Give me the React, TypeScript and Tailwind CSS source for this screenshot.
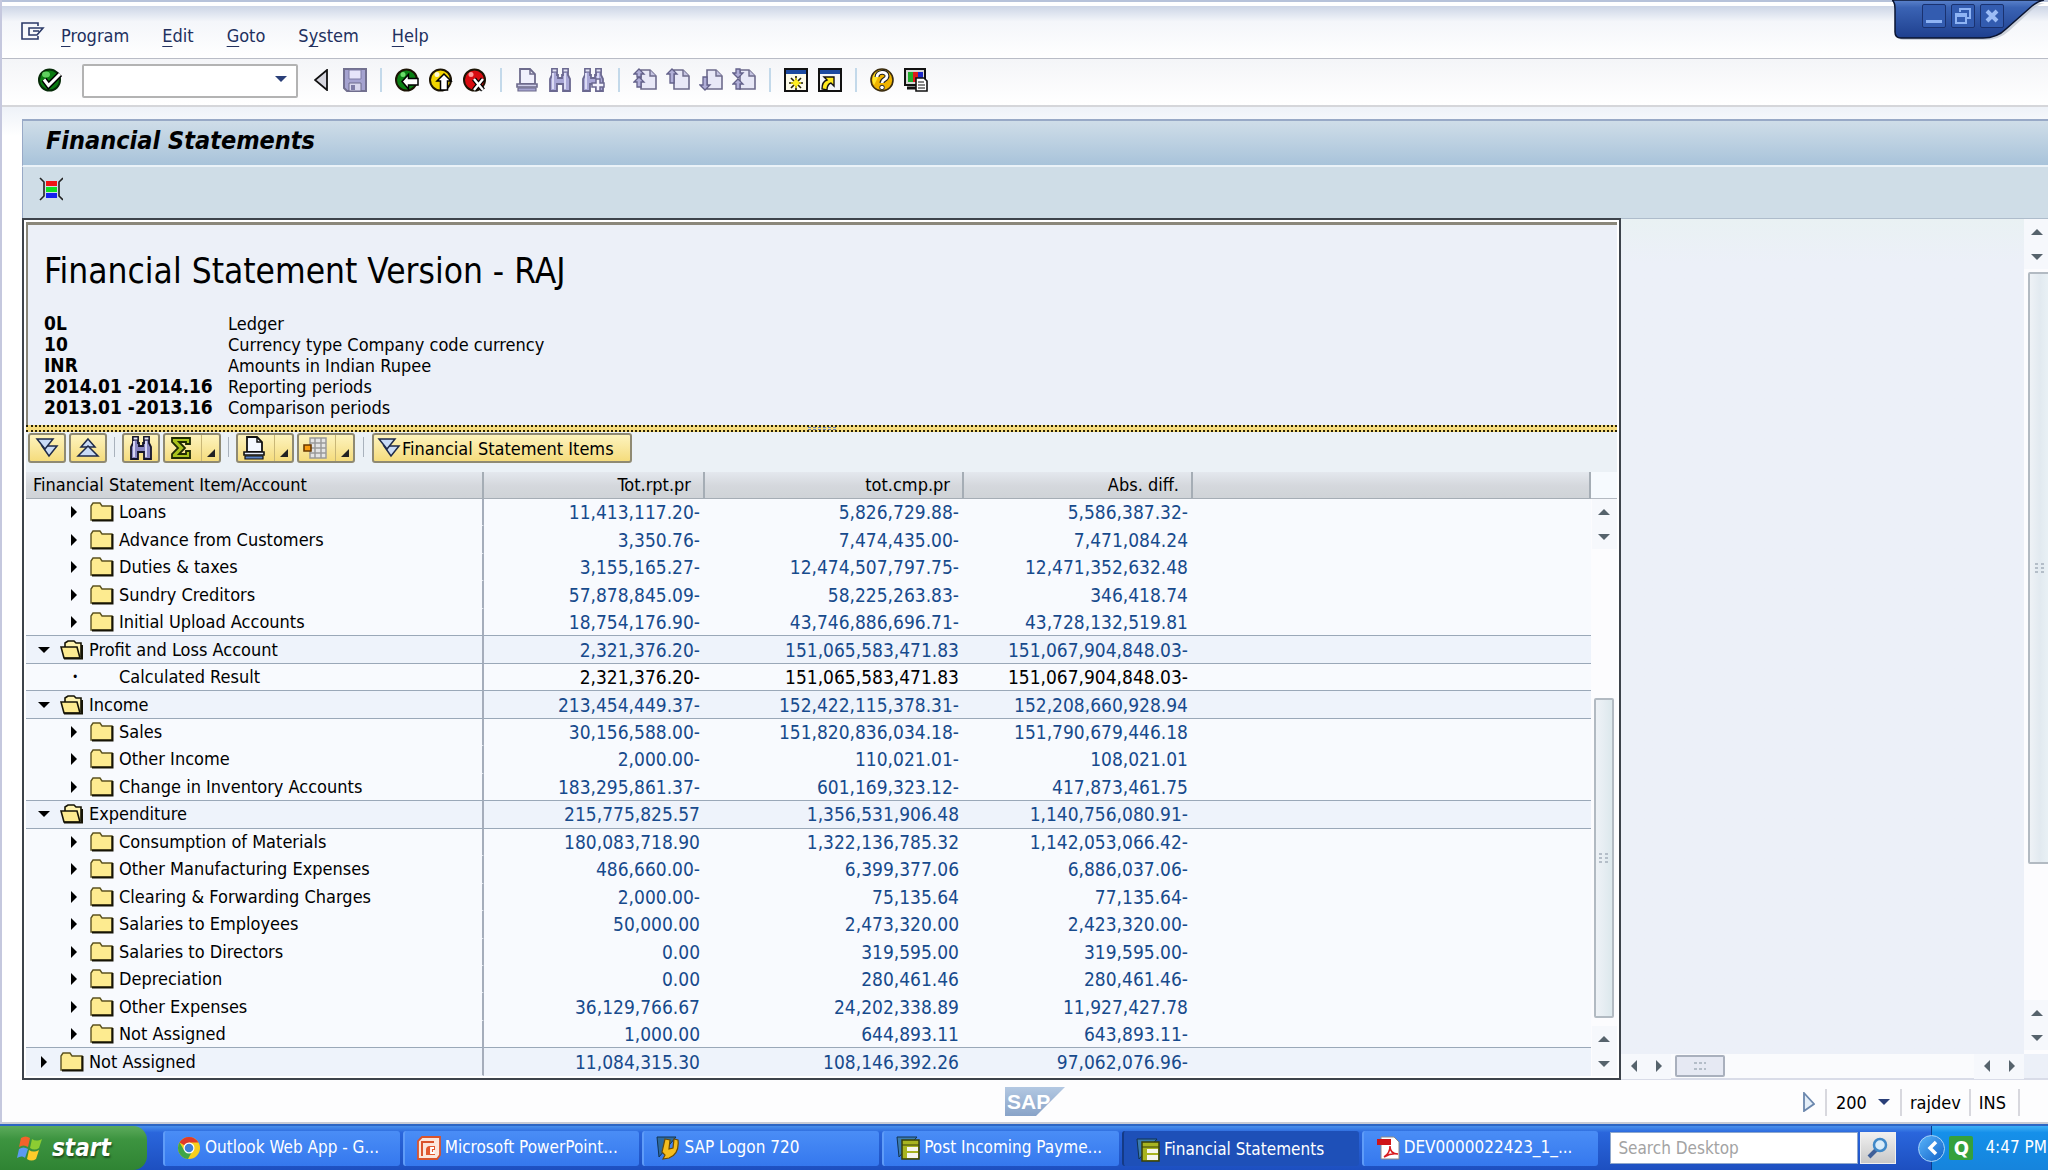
import type { ReactNode } from "react";

interface Row {
  level: 0 | 1;
  kind: "open" | "closed" | "leaf";
  name: string;
  values: [string, string, string];
}

const rows: Row[] = [
  { level: 1, kind: "closed", name: "Loans", values: ["11,413,117.20-", "5,826,729.88-", "5,586,387.32-"] },
  { level: 1, kind: "closed", name: "Advance from Customers", values: ["3,350.76-", "7,474,435.00-", "7,471,084.24"] },
  { level: 1, kind: "closed", name: "Duties & taxes", values: ["3,155,165.27-", "12,474,507,797.75-", "12,471,352,632.48"] },
  { level: 1, kind: "closed", name: "Sundry Creditors", values: ["57,878,845.09-", "58,225,263.83-", "346,418.74"] },
  { level: 1, kind: "closed", name: "Initial Upload Accounts", values: ["18,754,176.90-", "43,746,886,696.71-", "43,728,132,519.81"] },
  { level: 0, kind: "open", name: "Profit and Loss Account", values: ["2,321,376.20-", "151,065,583,471.83", "151,067,904,848.03-"] },
  { level: 1, kind: "leaf", name: "Calculated Result", values: ["2,321,376.20-", "151,065,583,471.83", "151,067,904,848.03-"] },
  { level: 0, kind: "open", name: "Income", values: ["213,454,449.37-", "152,422,115,378.31-", "152,208,660,928.94"] },
  { level: 1, kind: "closed", name: "Sales", values: ["30,156,588.00-", "151,820,836,034.18-", "151,790,679,446.18"] },
  { level: 1, kind: "closed", name: "Other Income", values: ["2,000.00-", "110,021.01-", "108,021.01"] },
  { level: 1, kind: "closed", name: "Change in Inventory Accounts", values: ["183,295,861.37-", "601,169,323.12-", "417,873,461.75"] },
  { level: 0, kind: "open", name: "Expenditure", values: ["215,775,825.57", "1,356,531,906.48", "1,140,756,080.91-"] },
  { level: 1, kind: "closed", name: "Consumption of Materials", values: ["180,083,718.90", "1,322,136,785.32", "1,142,053,066.42-"] },
  { level: 1, kind: "closed", name: "Other Manufacturing Expenses", values: ["486,660.00-", "6,399,377.06", "6,886,037.06-"] },
  { level: 1, kind: "closed", name: "Clearing & Forwarding Charges", values: ["2,000.00-", "75,135.64", "77,135.64-"] },
  { level: 1, kind: "closed", name: "Salaries to Employees", values: ["50,000.00", "2,473,320.00", "2,423,320.00-"] },
  { level: 1, kind: "closed", name: "Salaries to Directors", values: ["0.00", "319,595.00", "319,595.00-"] },
  { level: 1, kind: "closed", name: "Depreciation", values: ["0.00", "280,461.46", "280,461.46-"] },
  { level: 1, kind: "closed", name: "Other Expenses", values: ["36,129,766.67", "24,202,338.89", "11,927,427.78"] },
  { level: 1, kind: "closed", name: "Not Assigned", values: ["1,000.00", "644,893.11", "643,893.11-"] },
  { level: 0, kind: "closed", name: "Not Assigned", values: ["11,084,315.30", "108,146,392.26", "97,062,076.96-"] },
];

const details: [string, string][] = [
  ["0L", "Ledger"],
  ["10", "Currency type Company code currency"],
  ["INR", "Amounts in Indian Rupee"],
  ["2014.01 -2014.16", "Reporting periods"],
  ["2013.01 -2013.16", "Comparison periods"],
];

/* ---------- icons ---------- */

function CheckIcon() {
  return (
    <svg className="w-6 h-6" viewBox="0 0 24 24">
      <circle cx="11.5" cy="12" r="10.5" fill="#0b7a12" stroke="#062b08" strokeWidth="2" />
      <ellipse cx="8" cy="6.5" rx="4" ry="3" fill="#5fd05f" />
      <path d="M6 11.500l4.500 6L22 6" fill="none" stroke="#000" strokeWidth="6" />
      <path d="M6 11.500l4.500 6L22 6" fill="none" stroke="#fff" strokeWidth="3" />
    </svg>
  );
}

function BallIcon({ kind }: { kind: "back" | "up" | "cancel" }) {
  const fill = { back: "#0b8014", up: "#f2d400", cancel: "#d80c10" }[kind];
  const shine = { back: "#6bdc6b", up: "#fffbd0", cancel: "#ff9a9a" }[kind];
  return (
    <svg className="w-6 h-6" viewBox="0 0 24 24">
      <circle cx="11.500" cy="12" r="10.500" fill={fill} stroke="#1c1405" strokeWidth="2" />
      <circle cx="8" cy="6.500" r="2.500" fill={shine} />
      {kind === "back" && (
        <path d="M7 13.500l6.500-7v4H23v6.500h-9.500v4z" fill="#fff" stroke="#000" strokeWidth="1.500" />
      )}
      {kind === "up" && (
        <path d="M15 6l7 7h-3.500v9h-7v-9H8z" fill="#fff" stroke="#000" strokeWidth="1.500" />
      )}
      {kind === "cancel" && (
        <>
          <path d="M11 11l9 11M20 11l-9 11" stroke="#000" strokeWidth="5" />
          <path d="M11 11l9 11M20 11l-9 11" stroke="#fff" strokeWidth="2.500" />
        </>
      )}
    </svg>
  );
}

function SaveIcon() {
  return (
    <svg className="w-6 h-6" viewBox="0 0 24 24">
      <path d="M1 1h22v22H4l-3-3z" fill="#a5a3d0" stroke="#72708f" strokeWidth="2" />
      <path d="M6 2h12v9H6z" fill="#e6e4fa" stroke="#7f7da6" />
      <path d="M6 15h12v8H6z" fill="#d9d8ee" stroke="#6c6a8c" />
      <path d="M8 17h4v5H8z" fill="#7f7da6" />
    </svg>
  );
}

function PrintIcon({ active }: { active?: boolean }) {
  const line = active ? "#111" : "#6d6b8c";
  return (
    <svg className="w-6 h-6" viewBox="0 0 24 24">
      <path d="M5 1h10l5 5v10H5z" fill={active ? "#f4f8ff" : "#f0f0fc"} stroke={line} strokeWidth="1.800" />
      <path d="M15 1v5h5" fill="none" stroke={line} strokeWidth="1.500" />
      <path d="M2 16h20v3H2z" fill={active ? "#e6eefc" : "#d0cfea"} stroke={line} strokeWidth="1.600" />
      <path d="M3 20h18v3H3z" fill={active ? "#5a83c4" : "#a5a3d0"} stroke={line} strokeWidth="1.200" />
    </svg>
  );
}

function FindIcon({ plus, active }: { plus?: boolean; active?: boolean }) {
  const line = active ? "#14142a" : "#6a6890";
  return (
    <svg className="w-6 h-6" viewBox="0 0 24 24">
      <path
        d="M4 1h5v6h1v3h4V7h1V1h5v6l2 4v12h-7v-7H9v7H2V11l2-4z"
        fill={active ? "#8886c0" : "#a9a7d6"}
        stroke={line}
        strokeWidth="1.800"
      />
      <path d="M5 5v16M17 5v16" stroke={active ? "#d8d8f4" : "#dcdcf5"} strokeWidth="2" />
      <path d="M4 1h5v3H4zM15 1h5v3h-5z" fill="#e3e3f5" stroke={line} strokeWidth="1.200" />
      {plus && <path d="M15 11h4v4h4v4h-4v4h-4v-4h-4v-4h4z" fill="#f2f2fc" stroke={line} strokeWidth="1.500" />}
    </svg>
  );
}

function PageIcon({ kind }: { kind: "first" | "prev" | "next" | "last" }) {
  const arrows = {
    first: "M6 1l5 5H8v3H4V6H1zM6 9l5 5H8v5H4v-5H1z",
    prev: "M6 1l5 5H8v9H4V6H1z",
    next: "M4 9h4v8h3l-5 5-5-5h3z",
    last: "M4 1h4v4h3l-5 5-5-5h3zM6 11l5 5H8v5H4v-5H1z",
  }[kind];
  return (
    <svg className="w-6 h-6" viewBox="0 0 24 24">
      <path d="M8 2h9l6 6v13H8z" fill="#e8e8f7" stroke="#6d6b8c" strokeWidth="1.600" />
      <path d="M17 2v6h6" fill="#c5c4e2" stroke="#6d6b8c" strokeWidth="1.400" />
      <path d={arrows} fill="#b1afd8" stroke="#63618a" strokeWidth="1.300" />
    </svg>
  );
}

function SessionIcon() {
  return (
    <svg className="w-6 h-6" viewBox="0 0 24 24">
      <path d="M1 1h22v22H1z" fill="#fdfbe8" stroke="#111" strokeWidth="2" />
      <path d="M2 2h20v4H2z" fill="#1c4aa0" />
      <path d="M12 8v14M5 15h14M7 10l10 10M17 10L7 20" stroke="#1d1d05" strokeWidth="1.600" />
      <path d="M12 10v10M7 15h10" stroke="#e9d800" strokeWidth="1.600" />
      <circle cx="12" cy="15" r="3" fill="#ffee20" />
    </svg>
  );
}

function ShortcutIcon() {
  return (
    <svg className="w-6 h-6" viewBox="0 0 24 24">
      <path d="M1 1h22v22H1z" fill="#f4f5f8" stroke="#111" strokeWidth="2" />
      <path d="M2 2h20v4H2z" fill="#1c4aa0" />
      <path d="M4 21c0-6 2-8 5-9l-3-3h10v9l-3-3c-3 1-4 3-4 7z" fill="#ffe81c" stroke="#111" strokeWidth="1.400" />
    </svg>
  );
}

function HelpIcon() {
  return (
    <svg className="w-6 h-6" viewBox="0 0 24 24">
      <circle cx="12" cy="12" r="11" fill="#f0b400" stroke="#3a2c10" strokeWidth="1.600" />
      <path d="M12 2a10 10 0 0 0-8 15z" fill="#ffe52a" />
      <path d="M7 9c0-6 10-6 10-1 0 4-5 3-5 7" fill="none" stroke="#222" strokeWidth="5" />
      <path d="M7 9c0-6 10-6 10-1 0 4-5 3-5 7" fill="none" stroke="#fff" strokeWidth="2.800" />
      <circle cx="12" cy="19.500" r="2.300" fill="#fff" stroke="#222" />
    </svg>
  );
}

function LayoutIcon() {
  return (
    <svg className="w-6 h-6" viewBox="0 0 24 24">
      <path d="M1 1h20v16H1z" fill="#d8d8d8" stroke="#111" strokeWidth="2" />
      <path d="M4 4h5v10H4z" fill="#1fae2c" />
      <path d="M9 4h5v10H9z" fill="#e01818" />
      <path d="M14 4h5v10h-5z" fill="#1c28c8" />
      <path d="M3 20h9" stroke="#111" strokeWidth="3" />
      <path d="M12 10h8l3 3v10H12z" fill="#fff" stroke="#111" strokeWidth="1.600" />
      <path d="M14 14h6M14 17h7M14 20h7" stroke="#111" strokeWidth="1.200" />
    </svg>
  );
}

function MenuIcon() {
  return (
    <svg className="w-6 h-5" viewBox="0 0 24 20" fill="none" stroke="#2b3a68" strokeWidth="1.600">
      <path d="M17 4V1H1v16h16v-3" />
      <path d="M8 6h14l-6 7H8zM12 9h6" />
    </svg>
  );
}

function LegendIcon() {
  return (
    <svg className="w-6 h-6" viewBox="0 0 24 24">
      <path d="M7 4h11v5H7z" fill="#f01414" />
      <path d="M7 10h11v5H7z" fill="#10e020" />
      <path d="M7 16h11v5H7z" fill="#1420f0" />
      <path d="M1 1l4 4v14l-4 4M24 1l-4 4v14l4 4" fill="none" stroke="#222" strokeWidth="1.600" />
    </svg>
  );
}

function ExpandIcon({ up }: { up?: boolean }) {
  return (
    <svg className="w-6 h-6" viewBox="0 0 24 24" fill="#c9dbf6" stroke="#1e2a4a" strokeWidth="1.500">
      {up ? (
        <>
          <path d="M12 3l7 8H5z" />
          <path d="M12 10l10 10H2z" />
        </>
      ) : (
        <>
          <path d="M7 10h15l-8 10z" />
          <path d="M2 3h16l-8 10z" />
        </>
      )}
    </svg>
  );
}

function SumIcon() {
  return (
    <svg className="w-6 h-6" viewBox="0 0 24 24">
      <path d="M3 2h18v6h-4V6H10l6 6-6 6h7v-3h4v7H3v-4l6-6-6-6z" fill="#a9c21c" stroke="#1f2a04" strokeWidth="1.800" />
    </svg>
  );
}

function GridIcon() {
  return (
    <svg className="w-6 h-6" viewBox="0 0 24 24">
      <path d="M7 2h16v20H7zM7 7h16M7 12h16M7 17h16M12 2v20M18 2v20" fill="#e4e4e4" stroke="#9a9a9a" strokeWidth="1.500" />
      <path d="M1 9h7v6H1z" fill="#f79a10" stroke="#6a3a00" strokeWidth="1.600" />
    </svg>
  );
}

function FolderIcon({ open }: { open?: boolean }) {
  return (
    <svg className="w-6 h-5 shrink-0" viewBox="0 0 24 20">
      {open ? (
        <>
          <path d="M5 7V3l3-2h6l2 2h5v14" fill="#fff4b0" stroke="#161406" strokeWidth="1.600" />
          <path d="M1 7h16l3 11H4z" fill="#fdeb90" stroke="#161406" strokeWidth="1.600" />
          <path d="M4 18.500h18V5" fill="none" stroke="#161406" strokeWidth="2" />
        </>
      ) : (
        <>
          <path d="M1 18V4l2-3h7l2 3h10v14z" fill="#fdeb90" stroke="#5c5320" strokeWidth="1.400" />
          <path d="M2 18.500h20.500V4" fill="none" stroke="#161406" strokeWidth="2" />
        </>
      )}
    </svg>
  );
}

function Caret({ dir, className = "text-[#56636c]" }: { dir: "up" | "down" | "left" | "right"; className?: string }) {
  const d = { up: "M6 3l6 6H0z", down: "M0 3h12l-6 6z", left: "M9 0v12L3 6z", right: "M3 0l6 6-6 6z" }[dir];
  return (
    <svg className={`w-3 h-3 ${className}`} viewBox="0 0 12 12" fill="currentColor">
      <path d={d} />
    </svg>
  );
}

function Grip({ wide }: { wide?: boolean }) {
  return (
    <svg className="w-3 h-3" viewBox="0 0 12 12" stroke="#a4aebb" strokeWidth="1.500">
      {wide ? <path d="M0 3h3M5 3h3M10 3h2M0 9h3M5 9h3M10 9h2" /> : <path d="M1 2h3M7 2h3M1 6h3M7 6h3M1 10h3M7 10h3" />}
    </svg>
  );
}

function WindowsLogo() {
  return (
    <svg className="w-7 h-7" viewBox="0 0 28 28">
      <path d="M5 4c3-2 6-2 9 0l-2 9c-3-2-6-2-9 0z" fill="#f2622a" />
      <path d="M16 5c3 2 6 2 10 0l-3 9c-3 2-6 2-9 0z" fill="#8ccc32" />
      <path d="M3 15c3-2 6-2 9 0l-3 9c-2-2-5-2-8 0z" fill="#5c9af0" />
      <path d="M13 16c3 2 6 2 10 0l-3 9c-3 2-6 2-9 0z" fill="#fccb2a" />
    </svg>
  );
}

function ChromeIcon() {
  return (
    <svg className="w-6 h-6" viewBox="0 0 24 24">
      <circle cx="12" cy="12" r="11" fill="#f7cf1e" />
      <path d="M12 12L2.500 6.500A11 11 0 0 1 21.500 6.500H12z" fill="#df3a2a" />
      <path d="M2.500 6.500A11 11 0 0 0 11 23l5-9-9 0z" fill="#3fa648" />
      <circle cx="12" cy="12" r="5.500" fill="#fff" />
      <circle cx="12" cy="12" r="4.300" fill="#3f7fd8" />
    </svg>
  );
}

function PowerPointIcon() {
  return (
    <svg className="w-6 h-6" viewBox="0 0 24 24">
      <path d="M5 1h18v18l-3 4H1V5z" fill="#fbe6dc" stroke="#d9532c" strokeWidth="1.800" />
      <path d="M5 20V6h12" fill="none" stroke="#d9532c" strokeWidth="2" />
      <path d="M18 10h-5a4 4 0 0 0-4 4v5h9z" fill="#e2572c" />
      <path d="M17 12h-3v5h3M17 14v4" fill="none" stroke="#fff" strokeWidth="1.800" />
    </svg>
  );
}

function LogonIcon() {
  return (
    <svg className="w-6 h-6" viewBox="0 0 24 24">
      <path d="M1 1h19L3 21z" fill="#2d6aa0" stroke="#12334f" />
      <path d="M9 3l5 1-1 9 4-1 1-9 4 1c1 9-1 15-9 18l-6 1 2-4-3-3z" fill="#f5bd1e" stroke="#6b4a05" strokeWidth="1.200" />
    </svg>
  );
}

function SapWindowIcon() {
  return (
    <svg className="w-6 h-6" viewBox="0 0 24 24">
      <path d="M1 1h20L3 21z" fill="#3b7cb0" stroke="#12334f" />
      <path d="M6 4h17v19H6z" fill="#a8b420" stroke="#39400a" strokeWidth="1.500" />
      <path d="M11 11h11v4H11zM11 17h11v5H11z" fill="#f6f6ee" />
      <path d="M6 9h17" stroke="#39400a" />
    </svg>
  );
}

function PdfIcon() {
  return (
    <svg className="w-6 h-6" viewBox="0 0 24 24">
      <path d="M5 1h13l5 5v17H5z" fill="#fff" stroke="#8a8a8a" />
      <path d="M1 3h14v6H1z" fill="#cf1418" />
      <path d="M8 21c5-3 6-8 6-11 0 5 3 8 8 8-5-1-9 0-14 3z" fill="none" stroke="#d81c20" strokeWidth="1.500" />
    </svg>
  );
}

function SapLogo() {
  return (
    <svg className="w-15 h-[29px]" viewBox="0 0 60 29">
      <defs>
        <linearGradient id="sap" x1="0" y1="0" x2="0" y2="1">
          <stop offset="0" stopColor="#b3c8e2" />
          <stop offset="1" stopColor="#88a3c8" />
        </linearGradient>
      </defs>
      <path d="M0 0h60L31 29H0z" fill="url(#sap)" />
      <text x="2" y="22" fontFamily="Liberation Sans, sans-serif" fontWeight="700" fontSize="21" fill="#fff">
        SAP
      </text>
    </svg>
  );
}

/* ---------- small parts ---------- */

function IconButton({ label, children }: { label: string; children: ReactNode }) {
  return (
    <button aria-label={label} className="flex w-6 h-6 items-center justify-center shrink-0">
      {children}
    </button>
  );
}

function Separator() {
  return <div className="w-[2px] h-6 bg-[#c3d9ea] shrink-0" />;
}

function YellowButton({ label, menu, children }: { label: string; menu?: boolean; children: ReactNode }) {
  return (
    <button
      aria-label={label}
      className={`flex h-[30px] items-center rounded-[3px] border-2 border-[#8f8a72] bg-linear-to-b from-[#fdf3bd] to-[#f5dc7c] ${
        menu ? "w-[58px] pl-1" : "w-[38px] justify-center"
      }`}
    >
      {children}
      {menu && (
        <span className="ml-2 flex h-full flex-1 items-end justify-end border-l border-[#c9b777] pr-1 pb-1">
          <svg className="w-2 h-2" viewBox="0 0 8 8">
            <path d="M8 0v8H0z" fill="#222" />
          </svg>
        </span>
      )}
    </button>
  );
}

function ScrollButton({ label, dir }: { label: string; dir: "up" | "down" | "left" | "right" }) {
  return (
    <button aria-label={label} className="flex w-[25px] h-[25px] shrink-0 items-center justify-center bg-[#f6f8fc]">
      <Caret dir={dir} />
    </button>
  );
}

function MenuItem({ before = "", hot, after }: { before?: string; hot: string; after: string }) {
  return (
    <button className="leading-6">
      {before}
      <span className="underline underline-offset-4">{hot}</span>
      {after}
    </button>
  );
}

function TaskButton({ icon, label, active }: { icon: ReactNode; label: string; active?: boolean }) {
  return (
    <button
      className={`flex h-[35px] flex-1 items-center gap-1 rounded-[3px] border-l-2 pl-3 text-left text-[17px] whitespace-nowrap text-white ${
        active ? "border-[#143a86] bg-[#1e50b8] pt-1" : "border-[#5f9cf8] bg-linear-to-b from-[#4a8df6] to-[#3578ee]"
      }`}
    >
      {icon}
      <span>{label}</span>
    </button>
  );
}

/* ---------- sections ---------- */

function WindowControls() {
  return (
    <div className="absolute top-0 right-0 w-[156px] h-[42px]">
      <svg className="absolute inset-0 w-full h-full" viewBox="0 0 156 42">
        <defs>
          <linearGradient id="tab" x1="0" y1="0" x2="0" y2="1">
            <stop offset="0" stopColor="#5c83cc" />
            <stop offset="0.200" stopColor="#3a63b4" />
            <stop offset="1" stopColor="#1e3f8e" />
          </linearGradient>
        </defs>
        <path d="M1 3q4 0 4 8v22q0 7 6 7h82q14 0 24-9l24-22q6-5 12-6z" fill="#b9c0cc" opacity="0.700" />
        <path d="M0 0q3 2 3 9v23q0 6 6 6h82q14 0 23-9l26-23q6-5 12-6z" fill="url(#tab)" stroke="#0a1430" strokeWidth="1.500" />
      </svg>
      <div className="relative flex gap-[5px] pt-1 pl-[30px]">
        <button aria-label="Minimize" className="flex w-6 h-6 items-end justify-center rounded-[2px] border border-[#1a3270] bg-[#335cb0] pb-1">
          <span className="h-[3px] w-4 bg-[#8fb4f4]" />
        </button>
        <button aria-label="Restore" className="flex w-6 h-6 items-center justify-center rounded-[2px] border border-[#1a3270] bg-[#335cb0]">
          <svg className="w-4 h-4" viewBox="0 0 16 16" fill="none" stroke="#8fb4f4" strokeWidth="2">
            <path d="M5 4V1h10v9h-3M1 6h10v9H1zM1 8h10" />
          </svg>
        </button>
        <button aria-label="Close" className="flex w-6 h-6 items-center justify-center rounded-[2px] border border-[#1a3270] bg-[#335cb0]">
          <svg className="w-4 h-4" viewBox="0 0 16 16" stroke="#9dbdf6" strokeWidth="4">
            <path d="M3 3l10 10M13 3L3 13" />
          </svg>
        </button>
      </div>
    </div>
  );
}

function MenuBar() {
  return (
    <div className="h-[59px] border-t-2 border-b border-[#b6c2da] border-b-[#b9bcc6] bg-white pt-[4px]">
      <nav className="flex h-full items-center bg-linear-to-b from-[#ccd5e6] via-[#f4f6fa] via-30% to-white pl-[19px] pb-1 pt-1 text-[#22305e]">
        <MenuIcon />
        <div className="ml-4 flex items-center gap-[33px] pt-2">
          <MenuItem hot="P" after="rogram" />
          <MenuItem hot="E" after="dit" />
          <MenuItem hot="G" after="oto" />
          <MenuItem before="S" hot="y" after="stem" />
          <MenuItem hot="H" after="elp" />
        </div>
      </nav>
    </div>
  );
}

function StandardToolbar() {
  return (
    <div className="flex h-12 items-center border-b-2 border-[#d5d6da] bg-linear-to-b from-[#f4f5f8] to-white pb-1 pl-9">
      <IconButton label="Enter">
        <CheckIcon />
      </IconButton>
      <div className="relative ml-5 pt-[2px]">
        <input aria-label="Command" className="block h-[34px] w-[216px] rounded-[2px] border-2 border-[#b3b3b3] bg-white pr-8 pl-2" />
        <button aria-label="Command history" className="absolute top-[11px] right-[10px]">
          <Caret dir="down" className="w-[14px] text-[#2a3f78]" />
        </button>
      </div>
      <button aria-label="Hide command field" className="ml-4">
        <svg className="w-[14px] h-[22px]" viewBox="0 0 14 22">
          <path d="M13 1v20L1 11z" fill="#d6d6de" stroke="#111" strokeWidth="1.800" />
        </svg>
      </button>
      <div className="ml-[15px] flex items-center gap-[13px]">
        <IconButton label="Save"><SaveIcon /></IconButton>
        <Separator />
        <div className="flex items-center gap-[10px]">
          <IconButton label="Back"><BallIcon kind="back" /></IconButton>
          <IconButton label="Exit"><BallIcon kind="up" /></IconButton>
          <IconButton label="Cancel"><BallIcon kind="cancel" /></IconButton>
        </div>
        <Separator />
        <div className="flex items-center gap-[9px]">
          <IconButton label="Print"><PrintIcon /></IconButton>
          <IconButton label="Find"><FindIcon /></IconButton>
          <IconButton label="Find next"><FindIcon plus /></IconButton>
        </div>
        <Separator />
        <div className="flex items-center gap-[9px]">
          <IconButton label="First page"><PageIcon kind="first" /></IconButton>
          <IconButton label="Previous page"><PageIcon kind="prev" /></IconButton>
          <IconButton label="Next page"><PageIcon kind="next" /></IconButton>
          <IconButton label="Last page"><PageIcon kind="last" /></IconButton>
        </div>
        <Separator />
        <div className="flex items-center gap-[10px]">
          <IconButton label="New session"><SessionIcon /></IconButton>
          <IconButton label="Create shortcut"><ShortcutIcon /></IconButton>
        </div>
        <Separator />
        <div className="flex items-center gap-[10px]">
          <IconButton label="Help"><HelpIcon /></IconButton>
          <IconButton label="Customize layout"><LayoutIcon /></IconButton>
        </div>
      </div>
    </div>
  );
}

function ReportHeader() {
  return (
    <div className="h-[203px] border-t-[3px] border-l-2 border-[#8a877a] bg-[#ecf0f8] pt-[26px] pl-4">
      <h2 className="text-[35px] leading-10">Financial Statement Version - RAJ</h2>
      <dl className="mt-[22px] grid grid-cols-[184px_1fr] leading-[21px]">
        {details.map(([key, text]) => (
          <div key={key} className="contents">
            <dt className="text-[19px] leading-[21px] font-bold whitespace-nowrap">{key}</dt>
            <dd>{text}</dd>
          </div>
        ))}
      </dl>
    </div>
  );
}

function ReportToolbar() {
  return (
    <div className="flex h-10 items-start bg-[#ebf1f6] pt-[1px] pl-[2px]">
      <div className="flex gap-[3px]">
        <YellowButton label="Expand subtree"><ExpandIcon /></YellowButton>
        <YellowButton label="Collapse subtree"><ExpandIcon up /></YellowButton>
      </div>
      <div className="mx-[7px] mt-1 h-5 w-px bg-[#a9b2bc]" />
      <div className="flex gap-[3px]">
        <YellowButton label="Find"><FindIcon active /></YellowButton>
        <YellowButton label="Total" menu><SumIcon /></YellowButton>
      </div>
      <div className="mx-[7px] mt-1 h-5 w-px bg-[#a9b2bc]" />
      <div className="flex gap-[3px]">
        <YellowButton label="Print" menu><PrintIcon active /></YellowButton>
        <YellowButton label="Layout" menu><GridIcon /></YellowButton>
      </div>
      <div className="mx-2 mt-1 h-5 w-px bg-[#a9b2bc]" />
      <button className="flex h-[30px] items-center rounded-[3px] border-2 border-[#8f8a72] bg-linear-to-b from-[#fdf3bd] to-[#f5dc7c] pr-4 pl-[3px] whitespace-nowrap">
        <ExpandIcon />
        <span className="ml-px">Financial Statement Items</span>
      </button>
    </div>
  );
}

function TreeCell({ row }: { row: Row }) {
  return (
    <div className={`flex items-center ${row.level === 0 ? "pl-2" : "pl-[38px]"}`}>
      {row.kind === "leaf" ? (
        <span className="ml-2 w-[42px] text-xs">•</span>
      ) : (
        <>
          <button aria-label={`Toggle ${row.name}`} className="mr-[7px] flex w-[19px] justify-center">
            <Caret dir={row.kind === "open" ? "down" : "right"} className="text-black" />
          </button>
          <FolderIcon open={row.kind === "open"} />
        </>
      )}
      <span className="ml-[5px]">{row.name}</span>
    </div>
  );
}

function ReportTable() {
  const head = "border-r-2 border-b border-[#a5adb5] pr-3 text-right font-normal";
  return (
    <table className="flex-1 table-fixed border-separate border-spacing-0 bg-[#f8fafe] leading-[26px] whitespace-nowrap">
      <colgroup>
        <col className="w-[458px]" />
        <col className="w-[221px]" />
        <col className="w-[259px]" />
        <col className="w-[229px]" />
        <col />
      </colgroup>
      <thead>
        <tr className="bg-linear-to-b from-[#e4e8ee] via-[#d5d8dd] to-[#cfd3d7]">
          <th className="border-r-2 border-b border-[#a5adb5] pl-[7px] text-left font-normal">Financial Statement Item/Account</th>
          <th className={head}>Tot.rpt.pr</th>
          <th className={head}>tot.cmp.pr</th>
          <th className={head}>Abs. diff.</th>
          <th className={head}></th>
        </tr>
      </thead>
      <tbody>
        {rows.map((row, i) => {
          // rule above and below every top level node
          const ruled = (row.level === 0 || rows[i + 1]?.level === 0) && i < rows.length - 1;
          const line = ruled ? "border-b border-b-[#9aa8b8]" : "border-b border-b-transparent";
          const color = row.kind === "leaf" ? "text-black" : "text-[#174a8c]";
          return (
            <tr key={i} className={row.level === 0 ? "bg-[#eef3fb]" : ""}>
              <td className={`border-r-2 border-r-[#a5adbb] ${line}`}>
                <TreeCell row={row} />
              </td>
              {row.values.map((value, j) => (
                <td key={j} className={`pr-[5px] text-right text-[19px] ${color} ${line}`}>
                  {value}
                </td>
              ))}
              <td className={line}></td>
            </tr>
          );
        })}
      </tbody>
    </table>
  );
}

function TableScrollbar() {
  return (
    <div className="flex w-[26px] flex-col items-center bg-[#fcfcfe]">
      <div className="h-[27px] w-full border-b border-[#b4bac2] bg-[#f6fafe]" />
      <ScrollButton label="Scroll up" dir="up" />
      <ScrollButton label="Page up" dir="down" />
      <div className="grow-[154]" />
      <div className="flex w-5 grow-[314] items-center justify-center rounded-[2px] border-2 border-[#b2bac2] bg-linear-to-r from-[#eef2f6] via-[#e6edf2] to-[#dce8ec]">
        <Grip />
      </div>
      <div className="h-2" />
      <ScrollButton label="Page down" dir="up" />
      <ScrollButton label="Scroll down" dir="down" />
    </div>
  );
}

function SidePane() {
  return (
    <aside className="flex w-[427px] shrink-0 flex-col border-t border-b-2 border-[#aebccb] border-b-[#d9dce8] bg-linear-to-b from-[#e9f1f3] to-[#ecf0f8] to-5%">
      <div className="flex flex-1 justify-end">
        <div className="flex w-6 flex-col overflow-hidden bg-[#fcfcfe]">
          <ScrollButton label="Scroll up" dir="up" />
          <ScrollButton label="Page up" dir="down" />
          <div className="h-[3px]" />
          <div className="ml-1 flex w-6 grow-[592] items-center justify-center rounded-[2px] border-2 border-[#b2bac2] bg-linear-to-r from-[#eef2f6] via-[#e2eaf0] to-[#eaf2f6]">
            <Grip />
          </div>
          <div className="grow-[140]" />
          <ScrollButton label="Page down" dir="up" />
          <ScrollButton label="Scroll down" dir="down" />
          <div className="h-1" />
        </div>
      </div>
      <div className="flex h-6 shrink-0 items-center">
        <ScrollButton label="Scroll left" dir="left" />
        <ScrollButton label="Page left" dir="right" />
        <div className="flex h-full flex-1 items-center bg-[#fafbfd] pl-1">
          <div className="flex h-[22px] w-[50px] items-center justify-center rounded-[2px] border-2 border-[#a9b0bd] bg-[#e6e9f3]">
            <Grip wide />
          </div>
        </div>
        <ScrollButton label="Page right" dir="left" />
        <ScrollButton label="Scroll right" dir="right" />
        <div className="w-6" />
      </div>
    </aside>
  );
}

function StatusBar() {
  return (
    <div className="grid h-11 grid-cols-[1fr_60px_1fr] items-center border-b-2 border-[#c9ccd4] bg-[#fdfdfe] pr-2 pl-7">
      <div />
      <SapLogo />
      <div className="flex items-center justify-end pt-[2px] pr-5">
        <button aria-label="Show status" className="mr-[10px]">
          <svg className="w-3 h-5" viewBox="0 0 12 20">
            <path d="M1 1l10 11-10 7z" fill="#e4eef8" stroke="#6b87ad" strokeWidth="1.800" />
          </svg>
        </button>
        <button className="flex items-center gap-[10px] border-l-2 border-[#d8d8de] px-[9px]">
          200
          <Caret dir="down" className="w-[14px] text-[#2a3f78]" />
        </button>
        <span className="border-l-2 border-[#d8d8de] px-2">rajdev</span>
        <span className="border-x-2 border-[#d8d8de] pr-3 pl-2">INS</span>
      </div>
    </div>
  );
}

function Taskbar() {
  return (
    <footer className="flex h-[46px] shrink-0 items-center border-t-2 border-[#2c66c4] bg-linear-to-b from-[#4a90ec] via-[#2a66dc] via-15% to-[#1d4fc0]">
      <button className="flex h-full w-[147px] items-center gap-2 rounded-r-[14px] bg-linear-to-b from-[#5cab5c] via-[#3d9440] via-30% to-[#2f8433] pl-4 text-[24px] font-bold text-white italic [text-shadow:1px_2px_2px_#1c4a1c]">
        <WindowsLogo />
        start
      </button>
      <div className="ml-4 flex flex-1 gap-[3px]">
        <TaskButton icon={<ChromeIcon />} label="Outlook Web App - G..." />
        <TaskButton icon={<PowerPointIcon />} label="Microsoft PowerPoint..." />
        <TaskButton icon={<LogonIcon />} label="SAP Logon 720" />
        <TaskButton icon={<SapWindowIcon />} label="Post Incoming Payme..." />
        <TaskButton icon={<SapWindowIcon />} label="Financial Statements" active />
        <TaskButton icon={<PdfIcon />} label="DEV0000022423_1_..." />
      </div>
      <input
        aria-label="Search Desktop"
        placeholder="Search Desktop"
        className="ml-3 h-8 w-[248px] border border-[#8fa8cc] bg-white pl-[7px] text-[17px] placeholder:text-[#a3a3a3]"
      />
      <button aria-label="Search" className="ml-[2px] flex h-8 w-[36px] items-center justify-center border border-[#f0f0f0] bg-linear-to-b from-[#f0f0f0] to-[#c8c8c8]">
        <svg className="w-6 h-6" viewBox="0 0 24 24" fill="none">
          <path d="M11 13l-8 8" stroke="#3f5f98" strokeWidth="4" />
          <circle cx="14" cy="9" r="6" fill="#d8ecfa" stroke="#3f88c8" strokeWidth="2.500" />
        </svg>
      </button>
      <div className="ml-[35px] flex h-full items-center gap-1 border-l border-[#0c3c8c] bg-linear-to-b from-[#3cb0f6] via-[#1590ea] via-15% to-[#1684dc] pr-px text-[17px] text-white">
        <button aria-label="Show hidden icons" className="-ml-[14px] flex h-[27px] w-[27px] items-center justify-center rounded-full border border-[#a8d4fa] bg-linear-to-br from-[#58b4fa] to-[#1262c8]">
          <svg className="w-3 h-4" viewBox="0 0 12 16" fill="none" stroke="#fff" strokeWidth="3.500">
            <path d="M10 2L4 8l6 6" />
          </svg>
        </button>
        <span className="flex h-6 w-6 items-center justify-center rounded-[2px] bg-[#35a03c] font-bold text-[20px]">Q</span>
        <time className="ml-2 whitespace-nowrap">4:47 PM</time>
      </div>
    </footer>
  );
}

export default function App() {
  return (
    <div className="flex min-h-screen flex-col overflow-hidden bg-white font-['DejaVu_Sans_Condensed','DejaVu_Sans',sans-serif] text-[18px] text-black">
      <main className="relative flex flex-1 flex-col border-l-2 border-[#c5c8de]">
        <MenuBar />
        <WindowControls />
        <StandardToolbar />
        <div className="flex flex-1 flex-col bg-linear-to-b from-[#eef2f8] to-white to-3% pt-3">
          <div className="ml-5">
            <div className="flex h-12 items-center border-t-2 border-b-2 border-l border-[#98a9c6] border-b-[#eaf2f8] bg-linear-to-b from-[#cfdde8] to-[#a8c3da] pb-1 pl-[23px]">
              <h1 className="text-[25px] font-bold italic">Financial Statements</h1>
            </div>
            <div className="flex h-[51px] items-center border-l border-[#98a9c6] bg-[#cfdde7] pb-2 pl-4">
              <IconButton label="Legend"><LegendIcon /></IconButton>
            </div>
          </div>
          <div className="ml-5 flex flex-1">
            <section className="flex flex-1 flex-col border-2 border-[#3d434b] bg-white p-[2px]">
              <ReportHeader />
              <div className="flex h-[7px] justify-center border-y-2 border-dotted border-[#2a2205] bg-[#f6dc7e]">
                <div className="h-[3px] w-7 border-y border-dashed border-[#6d86b8]" />
              </div>
              <ReportToolbar />
              <div className="flex flex-1">
                <ReportTable />
                <TableScrollbar />
              </div>
            </section>
            <SidePane />
          </div>
        </div>
        <StatusBar />
      </main>
      <Taskbar />
    </div>
  );
}
